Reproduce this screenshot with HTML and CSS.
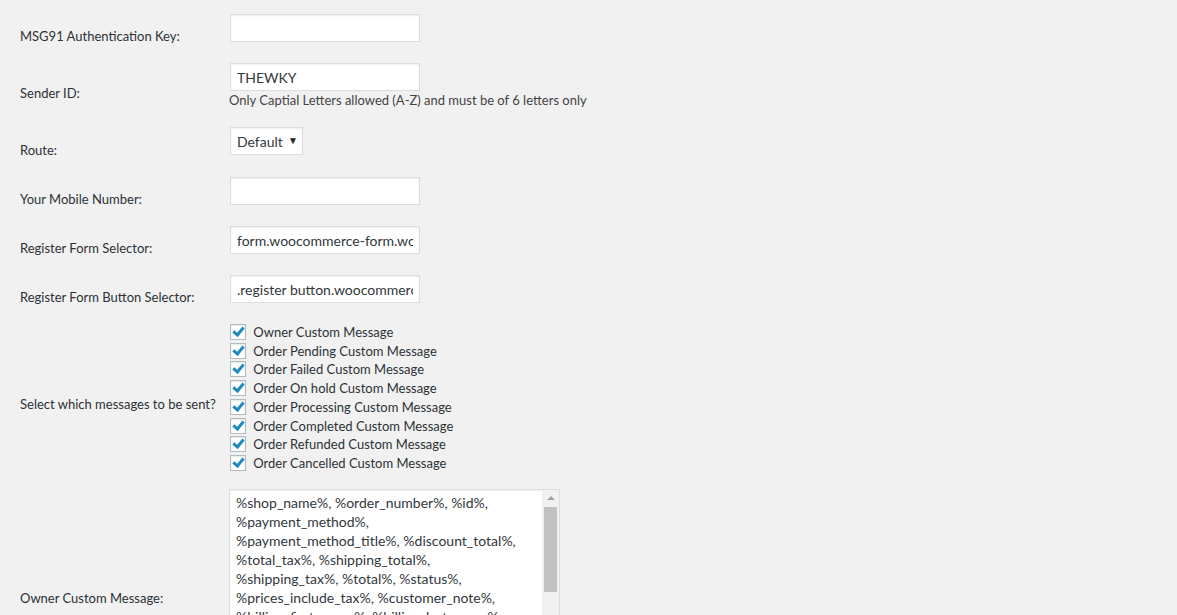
FILE: index.html
```html
<!DOCTYPE html>
<html lang="en">
<head>
  <meta charset="UTF-8" />
  <meta name="viewport" content="width=device-width, initial-scale=1.0"/>
  <title>MSG91 Settings</title>
  <link rel="stylesheet" href="styles.css">
</head>
<body>
  <div class="wrap">
    <form class="settings">
      <table class="form-table">
        <tr>
          <th><label for="authkey">MSG91 Authentication Key:</label></th>
          <td><input type="text" id="authkey" class="regular-text" value=""></td>
        </tr>
        <tr class="desc-row">
          <th><label for="sender">Sender ID:</label></th>
          <td>
            <input type="text" id="sender" class="regular-text" value="THEWKY">
            <p class="description">Only Captial Letters allowed (A-Z) and must be of 6 letters only</p>
          </td>
        </tr>
        <tr class="select-row">
          <th><label for="route">Route:</label></th>
          <td>
            <span class="select-wrap">
              <select id="route">
                <option>Default</option>
                <option>Promotional</option>
                <option>Transactional</option>
              </select>
            </span>
          </td>
        </tr>
        <tr>
          <th><label for="mobile">Your Mobile Number:</label></th>
          <td><input type="text" id="mobile" class="regular-text" value=""></td>
        </tr>
        <tr>
          <th><label for="formsel">Register Form Selector:</label></th>
          <td><input type="text" id="formsel" class="regular-text" value="form.woocommerce-form.woocommerce-form-register"></td>
        </tr>
        <tr>
          <th><label for="btnsel">Register Form Button Selector:</label></th>
          <td><input type="text" id="btnsel" class="regular-text" value=".register button.woocommerce-Button"></td>
        </tr>
        <tr class="checks-row">
          <th>Select which messages to be sent?</th>
          <td>
            <label class="check"><input type="checkbox" checked> Owner Custom Message</label>
            <label class="check"><input type="checkbox" checked> Order Pending Custom Message</label>
            <label class="check"><input type="checkbox" checked> Order Failed Custom Message</label>
            <label class="check"><input type="checkbox" checked> Order On hold Custom Message</label>
            <label class="check"><input type="checkbox" checked> Order Processing Custom Message</label>
            <label class="check"><input type="checkbox" checked> Order Completed Custom Message</label>
            <label class="check"><input type="checkbox" checked> Order Refunded Custom Message</label>
            <label class="check"><input type="checkbox" checked> Order Cancelled Custom Message</label>
          </td>
        </tr>
        <tr class="textarea-row">
          <th><label for="ownermsg">Owner Custom Message:</label></th>
          <td>
            <div class="textarea-box">
              <textarea id="ownermsg">%shop_name%, %order_number%, %id%,
%payment_method%,
%payment_method_title%, %discount_total%,
%total_tax%, %shipping_total%,
%shipping_tax%, %total%, %status%,
%prices_include_tax%, %customer_note%,
%billing_first_name%, %billing_last_name%,
%billing_company%, %billing_address_1%,
%billing_address_2%, %billing_city%,
%billing_state%, %billing_postcode%,
%billing_country%, %billing_email%,
%billing_phone%, %shipping_first_name%,
%shipping_last_name%, %shipping_company%,
%shipping_address_1%, %shipping_address_2%,
%shipping_city%, %shipping_state%,
%shipping_postcode%, %shipping_country%</textarea>
              <div class="scrollbar">
                <span class="scroll-arrow"></span>
                <span class="scroll-thumb"></span>
              </div>
            </div>
          </td>
        </tr>
      </table>
    </form>
  </div>
</body>
</html>
```

FILE: styles.css
```css
html, body {
  margin: 0;
  padding: 0;
  background-color: #f1f1f1;
}

body {
  font-family: Lato, "Noto Sans", sans-serif;
  font-size: 13px;
  color: #2c3136;
  overflow: hidden;
}

.wrap {
  padding: 4px 20px 0 20px;
}

.form-table {
  border-collapse: collapse;
}

.form-table th {
  width: 200px;
  padding: 15px 0 0 0;
  text-align: left;
  font-weight: normal;
  vertical-align: middle;
  line-height: 18px;
}

.form-table td {
  padding: 10px 10px 11px 10px;
  vertical-align: middle;
}

input[type="text"] {
  width: 190px;
  height: 28px;
  box-sizing: border-box;
  border: 1px solid #ddd;
  box-shadow: inset 0 1px 2px rgba(0,0,0,0.07);
  background: #fff;
  color: #32373c;
  font-family: inherit;
  font-size: 14px;
  padding: 0 6px;
  margin: 0;
  outline: none;
  display: block;
}

.desc-row td {
  padding-bottom: 9px;
}

.description {
  margin: 2px 0 0 -1px;
  line-height: 15px;
  color: #444;
}

.select-row td {
  padding-bottom: 12px;
}

.select-wrap {
  position: relative;
  display: inline-block;
}

.select-wrap select {
  appearance: none;
  -webkit-appearance: none;
  width: 73px;
  height: 28px;
  border: 1px solid #ddd;
  box-shadow: inset 0 1px 2px rgba(0,0,0,0.07);
  background: #fff;
  color: #32373c;
  font-family: inherit;
  font-size: 14px;
  padding: 0 0 0 6px;
  margin: 0;
  display: block;
  outline: none;
}

.select-wrap::after {
  content: "\25BC";
  position: absolute;
  right: 5px;
  top: 7px;
  font-size: 10px;
  color: #222;
  pointer-events: none;
}

.checks-row td {
  padding-top: 9px;
  padding-bottom: 6px;
}

.check {
  display: block;
  line-height: 18.7px;
  white-space: nowrap;
}

.check input[type="checkbox"] {
  appearance: none;
  -webkit-appearance: none;
  position: relative;
  width: 16px;
  height: 16px;
  margin: 0 4px 0 0;
  border: 1px solid #b4b9be;
  background: #fff;
  box-shadow: inset 0 1px 2px rgba(0,0,0,0.1);
  vertical-align: -3px;
  box-sizing: border-box;
}

.check input[type="checkbox"]:checked::before {
  content: "";
  position: absolute;
  left: 4px;
  top: 0px;
  width: 4px;
  height: 8px;
  border: solid #1e8cbe;
  border-width: 0 3px 3px 0;
  transform: rotate(40deg);
}

.textarea-row th {
  padding-top: 19px;
}

.textarea-box {
  display: flex;
  width: 331px;
  height: 198px;
  box-sizing: border-box;
  margin-left: -1px;
  border: 1px solid #ddd;
  box-shadow: inset 0 1px 2px rgba(0,0,0,0.07);
  background: #fff;
}

.textarea-box textarea {
  flex: 1;
  min-width: 0;
  margin: 0;
  padding: 3px 6px;
  border: none;
  background: transparent;
  color: #32373c;
  font-family: inherit;
  font-size: 14px;
  line-height: 19px;
  resize: none;
  overflow: hidden;
  white-space: pre;
  outline: none;
}

.scrollbar {
  width: 17px;
  flex: none;
  background: #f1f1f1;
  display: flex;
  flex-direction: column;
  align-items: center;
}

.scroll-arrow {
  height: 17px;
  width: 100%;
  display: flex;
  align-items: center;
  justify-content: center;
}

.scroll-arrow::before {
  content: "";
  width: 0;
  height: 0;
  border-left: 4px solid transparent;
  border-right: 4px solid transparent;
  border-bottom: 4px solid #a3a3a3;
}

.scroll-thumb {
  width: 13px;
  height: 85px;
  background: #c1c1c1;
}
```
